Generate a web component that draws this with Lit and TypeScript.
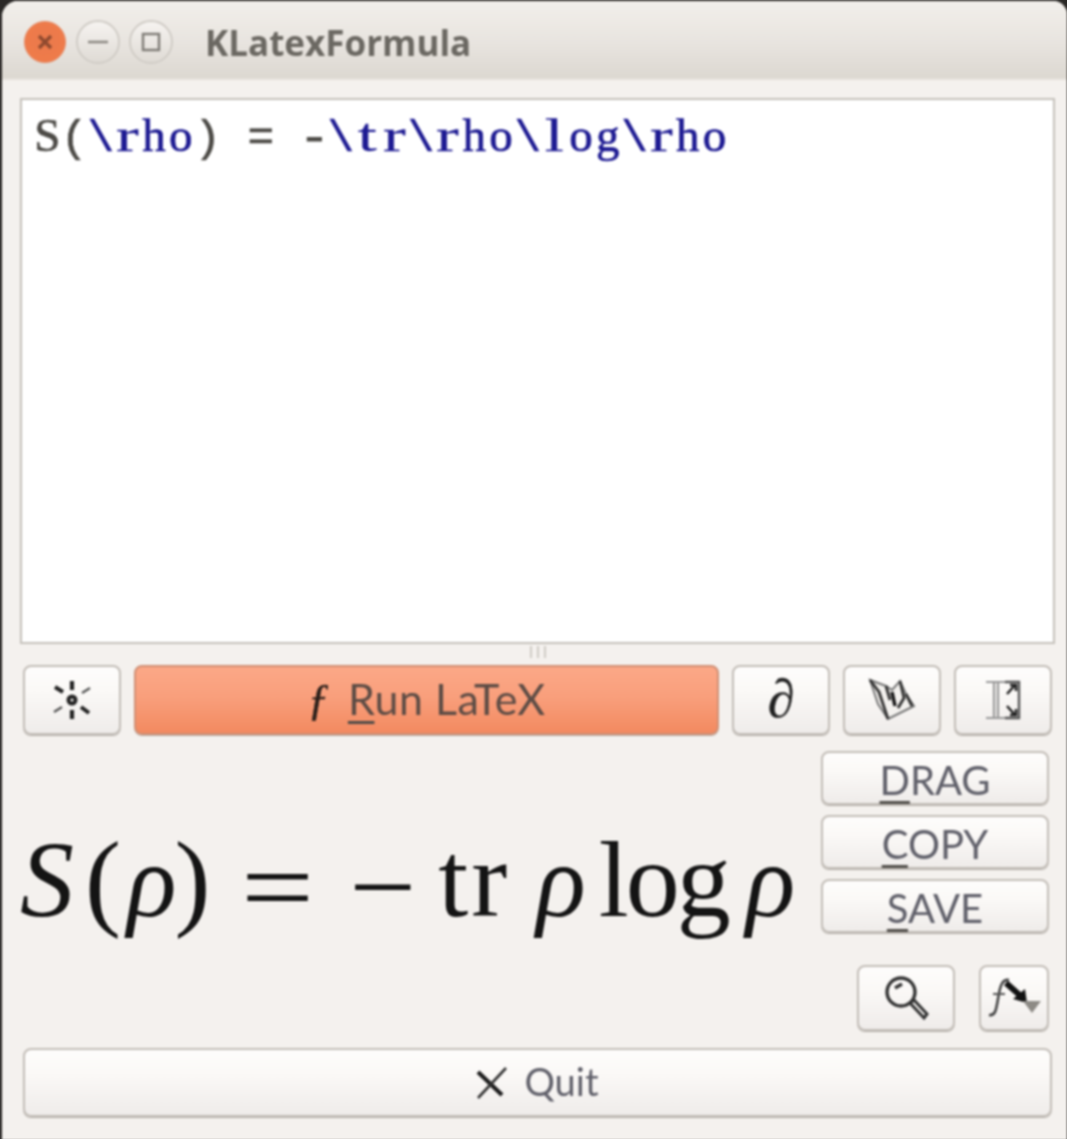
import { LitElement, html, css } from "lit";
import { customElement } from "lit/decorators.js";

const mono = (s: string) =>
  [...s].map((c) => {
    const cls = /[rtl]/.test(c) ? "ch ltr narrow" : /[a-zA-Z]/.test(c) ? "ch ltr" : c === "-" ? "ch dash" : "ch";
    return html`<span class=${cls}>${c}</span>`;
  });

@customElement("app-root")
export class AppRoot extends LitElement {
  static styles = css`
    :host { display: block; width: 1067px; height: 1139px; background: #2a2826; overflow: hidden; }
    .window { height: 1139px; margin-left: 2px; margin-top: 1px; box-sizing: border-box; background: #f4f1ee; border-radius: 16px 14px 0 0; display: flex; flex-direction: column; overflow: hidden; filter: blur(0.8px); }
    .titlebar { height: 79px; flex: none; box-sizing: border-box; display: flex; align-items: center; padding: 5px 0 0 22px; background: linear-gradient(#f2efeb, #e8e4df 55%, #dcd8d1); border-bottom: 2px solid #e4e0da; font: 700 35px "Open Sans", sans-serif; color: #6b6862; }
    .ctl { width: 44px; height: 44px; box-sizing: border-box; border-radius: 50%; margin-right: 9px; display: flex; align-items: center; justify-content: center; border: 2px solid #d0ccc6; background: linear-gradient(#f6f3f0, #dfdbd5); }
    .ctl.close { width: 42px; height: 42px; margin-right: 10px; border: 1px solid #e4865f; background: radial-gradient(circle at 50% 45%, #ea7a4c, #ef7b4a 70%, #f0926c); }
    .title { margin-left: 23px; }
    .body { flex: 1; display: flex; flex-direction: column; padding: 18px 12px 0 18px; }
    .editor { height: 546px; flex: none; box-sizing: border-box; background: #fff; border: 2px solid #c4c0ba; padding: 9px 12px; font: 44.5px/52px "Liberation Mono", monospace; white-space: pre; color: #4c4a46; -webkit-text-stroke: 0.7px currentColor; }
    .cmd { color: #1d1a92; }
    .ch { display: inline-block; width: 26.7px; text-align: center; }
    .ltr { font-family: "Liberation Serif", serif; font-size: 47px; }
    .narrow { transform: scaleX(1.45); -webkit-text-stroke: 0.3px currentColor; }
    .dash { transform: scaleX(1.15); -webkit-text-stroke: 1px currentColor; }
    .split { height: 21px; flex: none; display: flex; justify-content: center; align-items: flex-start; gap: 5px; padding-top: 2px; box-sizing: border-box; }
    .split i { width: 2px; height: 12px; background: #cfcbc5; }
    .row { display: flex; gap: 13px; height: 70px; flex: none; margin: 0 3px; }
    button { box-sizing: border-box; margin: 0; padding: 0; border: 2px solid #c2bdb7; border-radius: 8px; background: linear-gradient(#fefdfc, #fbf9f7 35%, #efecea); display: flex; align-items: center; justify-content: center; font-family: "Lato", sans-serif; font-size: 41px; color: #60606a; box-shadow: 0 1px 0 #b5b0aa; }
    u { text-decoration-thickness: 2.5px; text-underline-offset: 6px; text-decoration-color: #4f4c48; }
    .ico { width: 98px; flex: none; }
    .run { flex: 1; gap: 18px; font-size: 43px; letter-spacing: 0.5px; background: linear-gradient(#fca887, #f99f7c 45%, #f38a60); border-color: #d08f74; color: #5d4c45; }
    .lbl { padding-bottom: 4px; }
    .f { font: italic 400 44px "Liberation Serif", serif; color: #2a1f1a; padding-bottom: 2px; -webkit-text-stroke: 0.6px currentColor; }
    .del { font: italic 54px "Liberation Serif", serif; color: #1f1f1f; line-height: 1; padding-bottom: 3px; -webkit-text-stroke: 0.4px currentColor; }
    .lower { display: flex; height: 280px; flex: none; margin-top: 16px; }
    .formula { flex: 1; display: flex; align-items: baseline; padding-top: 75px; font: 108px/1 "Liberation Serif", serif; color: #141414; white-space: nowrap; box-sizing: border-box; height: 220px; }
    .formula span, .formula i { display: block; }
    .formula i { font-style: italic; }
    .rho { font-size: 103px; }
    .sp1 { margin-left: 11px; }
    .sp2 { margin-left: 6px; }
    .sp3 { margin-left: -2px; }
    .eq { margin-left: 37px; transform: translateY(7px) scaleX(1.2); }
    .minus { margin-left: 44px; transform: translateY(7px) scaleX(1.1); }
    .tr { margin-left: 25px; letter-spacing: 3px; }
    .sp4 { margin-left: 26px; }
    .log { margin-left: 13px; letter-spacing: -3px; }
    .sp5 { margin-left: 18px; }
    .side { width: 228px; flex: none; margin-right: 6px; display: flex; flex-direction: column; gap: 10px; }
    .side > button { height: 54px; font-size: 40px; padding-top: 3px; }
    .tools { display: flex; justify-content: flex-end; gap: 24px; margin-top: 22px; }
    .tools button { height: 66px; }
    .zoom { width: 98px; }
    .fx { width: 70px; }
    .quit { height: 69px; flex: none; margin: 17px 3px 0 3px; gap: 16px; font-size: 38px; }
    svg { display: block; }
  `;

  render() {
    return html`
      <div class="window">
        <div class="titlebar">
          <div class="ctl close">
            <svg width="20" height="20" viewBox="0 0 20 20"><path d="M4 4L16 16M16 4L4 16" stroke="#8f4a2f" stroke-width="3.4"/></svg>
          </div>
          <div class="ctl"><svg width="22" height="6" viewBox="0 0 22 6"><path d="M1 3H21" stroke="#8b8882" stroke-width="2.6"/></svg></div>
          <div class="ctl"><svg width="20" height="20" viewBox="0 0 20 20"><rect x="2" y="2" width="16" height="16" fill="none" stroke="#7e7b75" stroke-width="2.4"/></svg></div>
          <span class="title">KLatexFormula</span>
        </div>
        <div class="body">
          <div class="editor">${mono("S(")}<span class="cmd">${mono("\\rho")}</span>${mono(") = -")}<span class="cmd">${mono("\\tr\\rho\\log\\rho")}</span></div>
          <div class="split"><i></i><i></i><i></i></div>
          <div class="row">
            <button class="ico">
              <svg width="44" height="44" viewBox="0 0 44 44">
                <circle cx="22" cy="22" r="3.5" fill="none" stroke="#222" stroke-width="4"/>
                <path d="M22 3V12M22 32V41" stroke="#222" stroke-width="4.2"/>
                <path d="M5 9L13 14M31 29L39 35" stroke="#222" stroke-width="4"/>
                <path d="M4 34L12 29M32 15L40 10" stroke="#555" stroke-width="2.4"/>
              </svg>
            </button>
            <button class="run"><span class="f">ƒ</span><span class="lbl"><u>R</u>un LaTeX</span></button>
            <button class="ico"><span class="del">∂</span></button>
            <button class="ico">
              <svg width="48" height="44" viewBox="0 0 48 44">
                <path d="M2 2L10 26L20 41L46 28L38 16L32 3L24 12L18 8Z" fill="#f3f1ee" stroke="#777" stroke-width="2"/>
                <path d="M2 2L11 14L20 41M18 8L22 22M32 3L36 20L30 30M38 16L44 28" fill="none" stroke="#333" stroke-width="2.8"/>
                <path d="M24 14L27 28" stroke="#111" stroke-width="3.4"/>
              </svg>
            </button>
            <button class="ico">
              <svg width="36" height="40" viewBox="0 0 36 40">
                <path d="M1 2H22M1 38H22M9 2V38M13 2V38" stroke="#999" stroke-width="2.2" fill="none"/>
                <path d="M20 2H34V38H20" fill="none" stroke="#555" stroke-width="2.4"/>
                <path d="M30 5L22 14M25 5H31V11M22 26L30 35M31 29V35H25" stroke="#222" stroke-width="2.6" fill="none"/>
              </svg>
            </button>
          </div>
          <div class="lower">
            <div class="formula">
              <i>S</i><span class="sp1">(</span><i class="rho sp2">ρ</i><span class="sp3">)</span>
              <span class="eq">=</span>
              <span class="minus">−</span>
              <span class="tr">tr</span>
              <i class="rho sp4">ρ</i>
              <span class="log">log</span>
              <i class="rho sp5">ρ</i>
            </div>
            <div class="side">
              <button><span><u>D</u>RAG</span></button>
              <button><span><u>C</u>OPY</span></button>
              <button><span><u>S</u>AVE</span></button>
              <div class="tools">
                <button class="zoom">
                  <svg width="46" height="46" viewBox="0 0 46 46">
                    <circle cx="18" cy="17" r="14" fill="none" stroke="#333" stroke-width="3.4"/>
                    <path d="M12 13L19 9" stroke="#333" stroke-width="3.6"/>
                    <path d="M27 28L41 43L44 39L31 25Z" fill="#f7f5f3" stroke="#333" stroke-width="3"/>
                  </svg>
                </button>
                <button class="fx">
                  <svg width="54" height="42" viewBox="0 0 54 42">
                    <path d="M2 38C8 39 9 34 11 22C13 9 15 2 22 3" fill="none" stroke="#444" stroke-width="2.6"/>
                    <path d="M6 17H18" stroke="#555" stroke-width="2.2"/>
                    <path d="M19 6L37 22" stroke="#111" stroke-width="6"/>
                    <path d="M26 22L38 12L40 26Z" fill="#111"/>
                    <path d="M36 24H54L45 36Z" fill="#8d8a85"/>
                  </svg>
                </button>
              </div>
            </div>
          </div>
          <button class="quit">
            <svg width="32" height="34" viewBox="0 0 32 34"><path d="M2 6L26 29" stroke="#1c1c1c" stroke-width="4.2"/><path d="M2 32L30 2" stroke="#333" stroke-width="2.6"/></svg>
            <span class="lbl">Quit</span>
          </button>
        </div>
      </div>
    `;
  }
}
